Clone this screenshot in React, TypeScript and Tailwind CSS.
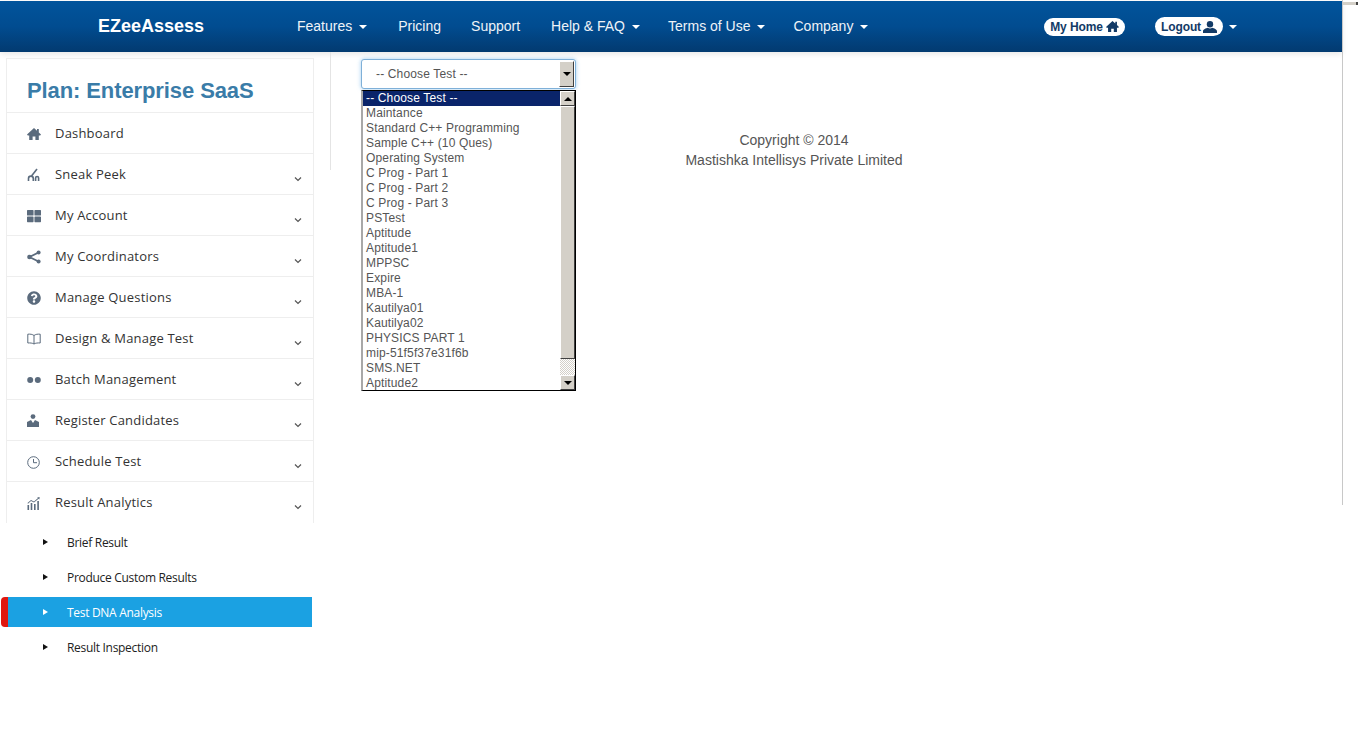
import {FaQuestionCircle, FaThLarge} from 'react-icons/fa';
import {ReactNode} from 'react';

const topLinks = [
  {label: 'Features', caret: true, gap: 'mr-[31px]'},
  {label: 'Pricing', caret: false, gap: 'mr-[30px]'},
  {label: 'Support', caret: false, gap: 'mr-[31px]'},
  {label: 'Help & FAQ', caret: true, gap: 'mr-[28px]'},
  {label: 'Terms of Use', caret: true, gap: 'mr-[28px]'},
  {label: 'Company', caret: true, gap: ''},
];

const options = [
  'Maintance',
  'Standard C++ Programming',
  'Sample C++ (10 Ques)',
  'Operating System',
  'C Prog - Part 1',
  'C Prog - Part 2',
  'C Prog - Part 3',
  'PSTest',
  'Aptitude',
  'Aptitude1',
  'MPPSC',
  'Expire',
  'MBA-1',
  'Kautilya01',
  'Kautilya02',
  'PHYSICS PART 1',
  'mip-51f5f37e31f6b',
  'SMS.NET',
  'Aptitude2',
];

function Caret({className}: {className: string}) {
  return <span className={`inline-block h-0 w-0 border-x-[4px] border-t-[4px] border-x-transparent ${className}`} />;
}

function HomeIcon({size, className}: {size: number; className: string}) {
  return (
    <svg width={size} height={size} viewBox="0 0 14 14" fill="currentColor" className={className}>
      <path d="M7 1 L0 7.6 L.8 8.4 H2.2 V13 H5.6 V9.4 H8.4 V13 H11.8 V8.4 H13.2 L14 7.6 L11.8 5.5 V2 H10 V3.8 Z" />
    </svg>
  );
}

function UserIcon() {
  return (
    <svg width="14" height="12" viewBox="0 0 14 12" fill="currentColor">
      <ellipse cx="7" cy="3.2" rx="3.2" ry="3.2" />
      <path d="M0 12 V10.4 C0 8.2 3 7.4 4.8 6.8 C6 7.6 8 7.6 9.2 6.8 C11 7.4 14 8.2 14 10.4 V12 Z" />
    </svg>
  );
}

function SneakIcon() {
  return (
    <svg width="14" height="14" viewBox="0 0 14 14" fill="none" stroke="#5b6b7d" strokeWidth="1.6">
      <path d="M10 1 L4.5 8" />
      <path d="M1.5 13 V10.5 a2.4 2.4 0 0 1 4.8 0 V13" />
      <path d="M8.6 13 V10 a1.5 1.5 0 0 1 3 0 V13" />
    </svg>
  );
}

function ShareIcon() {
  return (
    <svg width="14" height="14" viewBox="0 0 14 14" fill="#5b6b7d" stroke="#5b6b7d">
      <path d="M11.5 2.5 L2.5 7 L11.5 11.5" fill="none" strokeWidth="1.8" />
      <circle cx="11.6" cy="2.4" r="2" strokeWidth="0" />
      <circle cx="2.4" cy="7" r="2.2" strokeWidth="0" />
      <circle cx="11.6" cy="11.6" r="2" strokeWidth="0" />
    </svg>
  );
}

function BookIcon() {
  return (
    <svg width="14" height="12" viewBox="0 0 14 12" fill="none" stroke="#5b6b7d" strokeWidth="1">
      <path d="M7 2.5 C5.5 1.2 3 1 .8 1.2 V10 C3 9.8 5.5 10 7 11 C8.5 10 11 9.8 13.2 10 V1.2 C11 1 8.5 1.2 7 2.5 Z" />
      <path d="M7 2.5 V11" />
    </svg>
  );
}

function DotsIcon() {
  return (
    <svg width="14" height="8" viewBox="0 0 14 8" fill="#5b6b7d">
      <circle cx="3.2" cy="4" r="3" />
      <circle cx="10.8" cy="4" r="3" />
    </svg>
  );
}

function CandidateIcon() {
  return (
    <svg width="12" height="14" viewBox="0 0 12 14" fill="#5b6b7d">
      <circle cx="6" cy="2.6" r="2.4" />
      <path d="M0 13 V8 L4 6 L6 9 L8 6 L12 8 V13 Z" />
    </svg>
  );
}

function ClockIcon() {
  return (
    <svg width="13" height="13" viewBox="0 0 13 13" fill="none" stroke="#5b6b7d" strokeWidth="1">
      <circle cx="6.5" cy="6.5" r="5.8" />
      <path d="M6.5 3 V6.7 H10" />
    </svg>
  );
}

function AnalyticsIcon() {
  return (
    <svg width="13" height="13" viewBox="0 0 13 13" fill="#5b6b7d">
      <rect x="0.5" y="8" width="1.6" height="5" />
      <rect x="3.7" y="6" width="1.6" height="7" />
      <rect x="7" y="7" width="1.6" height="6" />
      <rect x="10.3" y="4" width="1.6" height="9" />
      <path d="M.5 6 L4 3 L7 4.5 L11 1 L10 .5 L12.6 0 L12.4 2.6 L11.6 1.8 L7 5.6 L4 4 L1 6.8 Z" />
    </svg>
  );
}

const menu: {label: string; icon: ReactNode; chevron: boolean}[] = [
  {label: 'Dashboard', icon: <HomeIcon size={14} className="text-[#5b6b7d]" />, chevron: false},
  {label: 'Sneak Peek', icon: <SneakIcon />, chevron: true},
  {label: 'My Account', icon: <FaThLarge size={14} className="text-[#5b6b7d]" />, chevron: true},
  {label: 'My Coordinators', icon: <ShareIcon />, chevron: true},
  {label: 'Manage Questions', icon: <FaQuestionCircle size={14} className="text-[#5b6b7d]" />, chevron: true},
  {label: 'Design & Manage Test', icon: <BookIcon />, chevron: true},
  {label: 'Batch Management', icon: <DotsIcon />, chevron: true},
  {label: 'Register Candidates', icon: <CandidateIcon />, chevron: true},
  {label: 'Schedule Test', icon: <ClockIcon />, chevron: true},
  {label: 'Result Analytics', icon: <AnalyticsIcon />, chevron: true},
];

const subMenu = ['Brief Result', 'Produce Custom Results', 'Test DNA Analysis', 'Result Inspection'];

function MenuRow({label, icon, chevron}: {label: string; icon: ReactNode; chevron: boolean}) {
  return (
    <div className="flex h-[41px] items-center border-b border-[#eeeeee] pt-[2px] pr-[11px] pl-[20px] last:border-b-0 last:pb-px">
      <span className="flex w-[28px] justify-start">{icon}</span>
      <span className="grow text-[13px] tracking-[0.2px] text-[#333333]">{label}</span>
      {chevron && (
        <svg width="8" height="6" viewBox="0 0 8 6" fill="none" stroke="#555555" strokeWidth="1.2" className="mt-[7px]">
          <path d="M1 1.5 L4 4.5 L7 1.5" />
        </svg>
      )}
    </div>
  );
}

function SubRow({label}: {label: string}) {
  const active = label === 'Test DNA Analysis';
  return (
    <div
      className={`flex h-[30px] w-[311px] items-center rounded-l-[4px] pt-[2px] text-[12px] tracking-[-0.3px] ${
        active ? 'border-l-[7px] border-[#e0170f] bg-[#1ba1e2] pl-[35px] text-white' : 'pl-[42px] text-[#222222]'
      }`}
    >
      <span
        className={`mr-[19px] -mt-[2px] inline-block h-0 w-0 border-y-[3.5px] border-l-[5px] border-y-transparent ${
          active ? 'border-l-white' : 'border-l-[#111111]'
        }`}
      />
      {label}
    </div>
  );
}

function ScrollArrow({up}: {up: boolean}) {
  return (
    <span className="flex h-[15px] w-[15px] items-center justify-center border border-t-white border-r-[#404040] border-b-[#404040] border-l-white bg-[#d4d0c8]">
      <span
        className={`h-0 w-0 border-x-[4px] border-x-transparent ${up ? 'border-b-[4px] border-b-black' : 'border-t-[4px] border-t-black'}`}
      />
    </span>
  );
}

export default function App() {
  return (
    <div className="relative flex h-[744px] w-[1366px] overflow-hidden bg-white font-['Liberation_Sans',sans-serif]">
      <div className="w-[1342px] shrink-0">
        <header className="mt-px flex h-[51px] items-center bg-gradient-to-b from-[#01549c] via-[#014c90] to-[#023a70] text-white shadow-[0_2px_6px_rgba(0,0,0,0.1)]">
          <span className="ml-[98px] w-[199px] text-[18px] font-bold">EZeeAssess</span>
          <nav className="flex w-[747px] items-center text-[14px] text-[#eef3f8]">
            {topLinks.map(link => (
              <span key={link.label} className={`flex items-center gap-[7px] ${link.gap}`}>
                {link.label}
                {link.caret && <Caret className="mt-px border-t-white" />}
              </span>
            ))}
          </nav>
          <span className="flex h-[18px] w-[81px] items-center justify-center gap-[3px] rounded-full bg-white text-[12px] font-bold tracking-[-0.1px] text-[#123a66]">
            My Home <HomeIcon size={13} className="" />
          </span>
          <span className="ml-[30px] flex h-[19px] w-[68px] items-center justify-center gap-[2px] rounded-full bg-white text-[12px] font-bold tracking-[-0.1px] text-[#123a66]">
            Logout <UserIcon />
          </span>
          <Caret className="ml-[6px] border-t-white" />
        </header>

        <div className="flex">
          <aside className="ml-px w-[329px] shrink-0 pt-[6px]">
            <div className="ml-[5px] w-[308px] border-x border-t border-[#eeeeee] font-['Open_Sans',sans-serif]">
              <h1 className="flex h-[54px] items-center border-b border-[#eeeeee] pt-[9px] pl-[20px] font-['Liberation_Sans',sans-serif] text-[22px] font-bold tracking-[-0.1px] text-[#3a7ca8]">
                Plan: Enterprise SaaS
              </h1>
              {menu.map(item => (
                <MenuRow key={item.label} {...item} />
              ))}
            </div>
            <div className="mt-[4px] flex flex-col gap-[5px] font-['Open_Sans',sans-serif]">
              {subMenu.map(label => (
                <SubRow key={label} label={label} />
              ))}
            </div>
          </aside>

          <div className="h-[118px] w-px shrink-0 bg-[#e4e4e4]" />

          <main className="grow pt-[78px] text-center text-[14px] leading-[20px] text-[#555555]">
            <div className="ml-[15px] w-[896px]">
              <p>Copyright © 2014</p>
              <p>Mastishka Intellisys Private Limited</p>
            </div>
          </main>
        </div>
      </div>

      <div className="h-[505px] w-px shrink-0 bg-[#c8c8c8]" />

      {/* open native-looking select over the page */}
      <div className="absolute top-[59px] left-[361px] w-[215px] tracking-[0.15px]">
        <div className="flex h-[30px] items-center justify-between rounded-[3px] border border-[#7fb0d8] bg-white pr-px pl-[14px] text-[12px] text-[#555555] shadow-[0_0_4px_rgba(102,175,233,0.6)]">
          -- Choose Test --
          <span className="flex h-[26px] w-[15px] items-center justify-center border border-t-white border-r-[#404040] border-b-[#404040] border-l-white bg-[#d4d0c8]">
            <Caret className="border-t-black" />
          </span>
        </div>
        <div className="mt-px flex h-[301px] border border-l-2 border-black border-l-[#a8a8a8] bg-white text-[12px] leading-[15px] text-[#555555]">
          <ul className="grow">
            <li className="bg-[#0a246a] pl-[3px] text-white">-- Choose Test --</li>
            {options.map(option => (
              <li key={option} className="pl-[3px]">
                {option}
              </li>
            ))}
          </ul>
          <div className="flex w-[15px] flex-col bg-[#e8e6e0]">
            <ScrollArrow up />
            <span className="h-[253px] border border-t-white border-r-[#404040] border-b-[#404040] border-l-white bg-[#d4d0c8]" />
            <span className="grow bg-[repeating-conic-gradient(#d4d0c8_0_25%,#ffffff_0_50%)] bg-[length:2px_2px]" />
            <ScrollArrow up={false} />
          </div>
        </div>
      </div>

      {/* leftover scrollbar sliver at the top right */}
      <div className="absolute top-[2px] left-[1343px] h-[3px] w-[15px] border-r-2 border-r-[#444444] bg-[#d4d0c8]" />
    </div>
  );
}
